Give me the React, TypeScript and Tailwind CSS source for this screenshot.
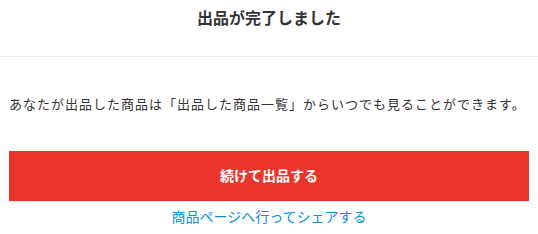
export default function App() {
  return (
    <div
      className="w-[538px] h-[234px] bg-white text-[#333]"
      style={{ fontFamily: '"Noto Sans CJK JP", "Noto Sans", sans-serif' }}
    >
      <div className="h-[57px] border-b border-[#eeeeee] pt-[6px]">
        <h1 className="text-center text-[16px] leading-[22px] font-bold">
          出品が完了しました
        </h1>
      </div>

      <div className="px-[9px]">
        <p className="mt-[37px] text-[13px] leading-[20px] tracking-[1px] whitespace-nowrap">
          あなたが出品した商品は「出品した商品一覧」からいつでも見ることができます。
        </p>

        <button className="mt-[37px] flex h-[50px] w-full items-center justify-center bg-[#ea352d] pb-[2px] text-[14px] font-bold text-white">
          続けて出品する
        </button>

        <div className="mt-[2px] text-center">
          <a className="text-[14px] leading-[20px] text-[#0a8fdd]" href="#">
            商品ページへ行ってシェアする
          </a>
        </div>
      </div>
    </div>
  );
}
